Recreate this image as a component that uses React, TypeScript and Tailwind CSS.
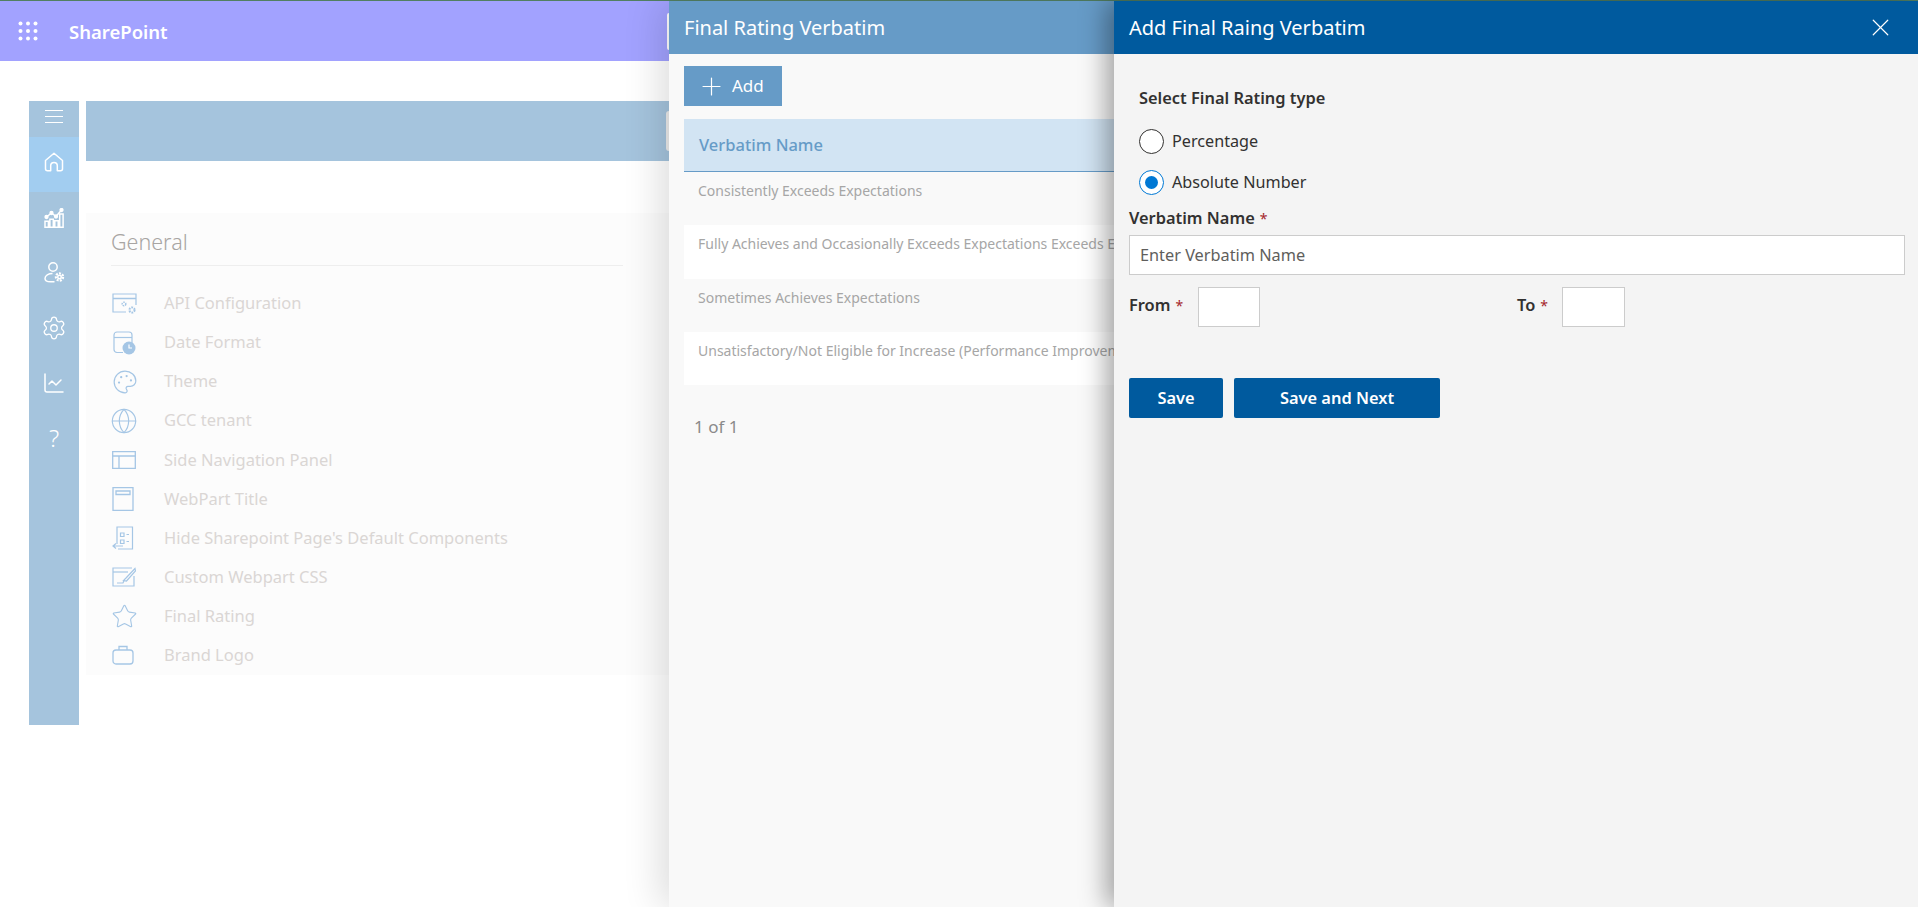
import * as React from "react";
import { Settings, ChartLine, Globe, Star, Plus, X, Palette } from "lucide-react";

const font = { fontFamily: '"Noto Sans", "Open Sans", sans-serif' };

function WaffleIcon() {
  const dots = [2, 9.5, 17];
  return (
    <svg width="20" height="20" viewBox="0 0 20 20" fill="white">
      {dots.map((y) => dots.map((x) => <circle key={`${x}-${y}`} cx={x + 0.5} cy={y + 0.5} r="2" />))}
    </svg>
  );
}

function HomeIcon() {
  return (
    <svg width="20" height="20" viewBox="0 0 20 20" fill="none" stroke="white" strokeWidth="1.5">
      <path d="M1.5 8.5 10 1.2l8.5 7.3v8.2a2 2 0 0 1-2 2h-3.2v-5a3.3 3.3 0 0 0-6.6 0v5H3.5a2 2 0 0 1-2-2z" strokeLinejoin="round" />
    </svg>
  );
}

function BarsIcon() {
  return (
    <svg width="20" height="20" viewBox="0 0 20 20" fill="none" stroke="white" strokeWidth="1.5">
      <path d="M1 19.3v-6h3.400v6zM5.900 19.3v-8h3.400v8zM10.800 19.3v-6.500h3.400v6.500zM15.700 19.3V6h3.400v13.300z" />
      <path d="M2.500 9 7.500 5l4.500 3.500L17.500 2" strokeWidth="1.500" />
      <circle cx="2.500" cy="9" r="1.400" fill="white" />
      <circle cx="7.500" cy="5" r="1.400" fill="white" />
      <circle cx="12" cy="8.500" r="1.400" fill="white" />
      <circle cx="17.500" cy="2" r="1.400" fill="white" />
    </svg>
  );
}

function UserGearIcon() {
  return (
    <svg width="21" height="21" viewBox="0 0 21 21" fill="none" stroke="white" strokeWidth="1.500">
      <circle cx="9" cy="5" r="4.200" />
      <path d="M8.500 11.500C4.500 11.500 1 13.500 1 16.500 1 18.800 3.500 19.800 6.500 19.800h4" />
      <circle cx="15.500" cy="15" r="2.500" fill="white" strokeWidth="0" />
      <circle cx="15.500" cy="15" r="3.600" strokeDasharray="2 1.200" strokeWidth="2.200" />
      <circle cx="15.500" cy="15" r="1" fill="#a5c4dd" strokeWidth="0" />
    </svg>
  );
}

function ApiConfigIcon() {
  return (
    <svg width="25" height="22" viewBox="0 0 25 22" fill="none" stroke="currentColor" strokeWidth="1.200">
      <path d="M14 19H1V1h23v11" />
      <path d="M1 5.500h23" strokeWidth="1.500" />
      <circle cx="12" cy="11" r="1.800" strokeDasharray="1.500 0.800" strokeWidth="1.500" />
      <circle cx="20" cy="17" r="2.600" strokeDasharray="1.800 1" strokeWidth="2" />
    </svg>
  );
}

function DateFormatIcon() {
  return (
    <svg width="24" height="24" viewBox="0 0 24 24" fill="none" stroke="currentColor" strokeWidth="1.200">
      <path d="M11 21.500H5a3 3 0 0 1-3-3V4a3 3 0 0 1 3-3h12a3 3 0 0 1 3 3v8" />
      <path d="M2 6.500h18" />
      <circle cx="17" cy="17" r="6.500" fill="currentColor" stroke="none" />
      <path d="M17 13.500V17h3" stroke="white" />
    </svg>
  );
}

function PanelIcon() {
  return (
    <svg width="24" height="18" viewBox="0 0 24 18" fill="none" stroke="currentColor" strokeWidth="1.300">
      <path d="M.7.700h22.600v16.600H.7z" />
      <path d="M.7 5h22.600M7 5v12.300" />
    </svg>
  );
}

function TitleIcon() {
  return (
    <svg width="22" height="24" viewBox="0 0 22 24" fill="none" stroke="currentColor" strokeWidth="1.300">
      <path d="M1 .7h20v22.600H1z" />
      <path d="M4 4h14v3.500H4z" />
    </svg>
  );
}

function HideIcon() {
  return (
    <svg width="22" height="24" viewBox="0 0 22 24" fill="none" stroke="currentColor" strokeWidth="1.200">
      <path d="M5 18V1h15.500v22H6" />
      <path d="M8.500 7h3.500v3.500H8.500zM8.500 14h3.500v3.500H8.500zM14.500 8.500H17M14.500 15.500H17" />
      <path d="M11 20H1m3-2.500L1 20l3 2.500" />
    </svg>
  );
}

function CssIcon() {
  return (
    <svg width="24" height="20" viewBox="0 0 24 20" fill="none" stroke="currentColor" strokeWidth="1.200">
      <path d="M20 1H1v18h21V9" />
      <path d="M1 5h15" />
      <path d="M23 1.500 14 11l-2.500 2.500 3 .5L23.500 4z" />
      <path d="M5 16h6l1-2.500" />
    </svg>
  );
}

function BrandIcon() {
  return (
    <svg width="22" height="20" viewBox="0 0 22 20" fill="none" stroke="currentColor" strokeWidth="1.300">
      <rect x="1" y="5" width="20" height="14" rx="3" />
      <path d="M7 5V1.500h8V5" />
    </svg>
  );
}

const settingsItems: { label: string; icon: React.ReactNode }[] = [
  { label: "API Configuration", icon: <ApiConfigIcon /> },
  { label: "Date Format", icon: <DateFormatIcon /> },
  { label: "Theme", icon: <Palette size={26} strokeWidth={1.100} /> },
  { label: "GCC tenant", icon: <Globe size={28} strokeWidth={1} className="-ml-[2px]" /> },
  { label: "Side Navigation Panel", icon: <PanelIcon /> },
  { label: "WebPart Title", icon: <TitleIcon /> },
  { label: "Hide Sharepoint Page's Default Components", icon: <HideIcon /> },
  { label: "Custom Webpart CSS", icon: <CssIcon /> },
  { label: "Final Rating", icon: <Star size={27} strokeWidth={1} className="-ml-[1px]" /> },
  { label: "Brand Logo", icon: <BrandIcon /> },
];

const verbatims = [
  "Consistently Exceeds Expectations",
  "Fully Achieves and Occasionally Exceeds Expectations Exceeds Expectations",
  "Sometimes Achieves Expectations",
  "Unsatisfactory/Not Eligible for Increase (Performance Improvement Plan)",
];

function SideNav() {
  return (
    <div className="w-[50px] h-[624px] shrink-0 bg-[#a5c4dd] flex flex-col items-center">
      <div className="h-[36px] pb-[6px] w-full flex flex-col items-center justify-center gap-[5px]">
        <div className="w-[18px] h-px bg-white" />
        <div className="w-[18px] h-px bg-white" />
        <div className="w-[18px] h-px bg-white" />
      </div>
      <div className="h-[55px] pb-[5px] w-full bg-[#a2cdf0] flex items-center justify-center">
        <HomeIcon />
      </div>
      <div className="h-[55px] pb-[4px] w-full flex items-center justify-center">
        <BarsIcon />
      </div>
      <div className="h-[55px] pb-[4px] w-full flex items-center justify-center">
        <UserGearIcon />
      </div>
      <div className="h-[55px] pb-[4px] w-full flex items-center justify-center">
        <Settings size={26} color="white" strokeWidth={1.200} />
      </div>
      <div className="h-[55px] pb-[4px] w-full flex items-center justify-center">
        <ChartLine size={24} color="white" strokeWidth={1.500} />
      </div>
      <div className="h-[55px] pb-[4px] w-full flex items-center justify-center text-white text-[24px] font-light">?</div>
    </div>
  );
}

function BackgroundPage() {
  return (
    <div className="w-[669px] shrink-0 flex flex-col overflow-hidden relative bg-white">
      <div className="h-[60px] bg-[#a2a2ff] flex items-center pl-[18px] shrink-0">
        <WaffleIcon />
        <span className="ml-[31px] pt-[1px] text-white text-[18.500px] font-semibold">SharePoint</span>
      </div>
      <div className="absolute left-[667px] top-[12px] w-[2px] h-[37px] bg-white rounded-l-sm" />
      <div className="flex pl-[29px] pt-[40px] gap-[7px]">
        <SideNav />
        <div className="flex-1 min-w-0">
          <div className="h-[60px] bg-[#a5c4dd] relative">
            <div className="absolute right-0 top-[10px] w-[3px] h-[40px] bg-[#ececec] rounded-l-sm" />
          </div>
          <div className="mt-[52px] h-[462px] bg-[#fcfcfc] pl-[25px] pr-[46px] pt-[14px]">
            <div className="h-[39px] border-b border-[#eeeeee] text-[#a8a5a3] text-[21.500px] font-light leading-[30px]">General</div>
            <div className="pt-[18px] flex flex-col">
              {settingsItems.map((item) => (
                <div key={item.label} className="h-[39.100px] flex items-center">
                  <div className="w-[53px] flex items-center pl-[1px] text-[#a5c6e5]">{item.icon}</div>
                  <span className="text-[#dad6d4] text-[16.500px] whitespace-nowrap">{item.label}</span>
                </div>
              ))}
            </div>
          </div>
        </div>
      </div>
    </div>
  );
}

function VerbatimPanel() {
  return (
    <div className="w-[445px] shrink-0 relative z-10 bg-[#f9f9f9] shadow-[-8px_0_36px_rgba(0,0,0,0.14)] flex flex-col overflow-hidden">
      <div className="h-[53px] bg-[#669bc7] flex items-center pl-[15px] text-white text-[20px]">Final Rating Verbatim</div>
      <div className="pl-[15px] pt-[12px]">
        <button className="h-[40px] w-[98px] bg-[#669bc7] text-white text-[17px] flex items-center pl-[13px] gap-[6px]">
          <Plus size={29} strokeWidth={1} />
          Add
        </button>
        <div className="mt-[13px] w-[900px]">
          <div className="h-[53px] bg-[#d2e4f3] border-b border-[#669bc7] flex items-center pl-[15px] text-[#669bc7] text-[16.500px] font-medium">
            Verbatim Name
          </div>
          {verbatims.map((name, i) => (
            <div
              key={name}
              className={
                i % 2 === 0
                  ? "h-[53.300px] pl-[14px] pt-[9px] text-[#a6a6a6] text-[14px] leading-[20px] whitespace-nowrap"
                  : "h-[53.300px] pl-[14px] pt-[9px] text-[#a6a6a6] text-[14px] leading-[20px] whitespace-nowrap bg-white"
              }
            >
              {name}
            </div>
          ))}
        </div>
        <div className="mt-[29px] pl-[10px] text-[#8a8a8a] text-[17px]">1 of 1</div>
      </div>
    </div>
  );
}

function Req() {
  return <span className="text-[#a4262c] ml-[5px] font-normal text-[14px]">*</span>;
}

function AddVerbatimPanel() {
  return (
    <div className="flex-1 min-w-0 relative z-20 bg-[#f4f4f4] shadow-[-8px_0_24px_rgba(0,0,0,0.35)] flex flex-col">
      <div className="h-[53px] bg-[#005a9e] flex items-center justify-between pl-[15px] pr-[23px] text-white text-[20px]">
        Add Final Raing Verbatim
        <X size={29} strokeWidth={1} />
      </div>
      <div className="pl-[15px] pr-[13px]">
        <div className="pl-[10px] pt-[33px] text-[#323130] text-[16.400px] font-semibold leading-[22px]">Select Final Rating type</div>
        <div className="mt-[12px] pl-[10px] flex items-center gap-[8px] h-[41px] text-[#323130] text-[16.200px]">
          <span className="w-[25px] h-[25px] rounded-full border border-[#323130] bg-white" />
          Percentage
        </div>
        <div className="pl-[10px] flex items-center gap-[8px] h-[41px] text-[#323130] text-[16.200px]">
          <span className="w-[25px] h-[25px] rounded-full border border-[#0078d4] bg-white flex items-center justify-center">
            <span className="w-[13px] h-[13px] rounded-full bg-[#0078d4]" />
          </span>
          Absolute Number
        </div>
        <div className="pt-[4px] h-[32px] text-[#323130] text-[16.400px] font-semibold leading-[22px]">
          Verbatim Name
          <Req />
        </div>
        <div className="h-[40px] bg-white border border-[#cccccc] flex items-center pl-[10px] text-[#605e5c] text-[16.300px]">Enter Verbatim Name</div>
        <div className="mt-[12px] flex items-center">
          <div className="w-[69px] pb-[4px] text-[#323130] text-[16.400px] font-semibold">
            From
            <Req />
          </div>
          <div className="w-[62px] h-[40px] bg-white border border-[#cccccc]" />
          <div className="ml-[257px] w-[45px] pb-[4px] text-[#323130] text-[16.400px] font-semibold">
            To
            <Req />
          </div>
          <div className="w-[63px] h-[40px] bg-white border border-[#cccccc]" />
        </div>
        <div className="mt-[51px] flex gap-[11px]">
          <button className="h-[40px] w-[94px] bg-[#005a9e] rounded-[2px] text-white text-[16.400px] font-semibold">Save</button>
          <button className="h-[40px] w-[206px] bg-[#005a9e] rounded-[2px] text-white text-[16.400px] font-semibold">Save and Next</button>
        </div>
      </div>
    </div>
  );
}

export default function App() {
  return (
    <div style={font} className="h-[907px] w-full overflow-hidden bg-white flex flex-col">
      <div className="h-px bg-[#527f62] shrink-0" />
      <div className="flex flex-1 min-h-0">
        <BackgroundPage />
        <VerbatimPanel />
        <AddVerbatimPanel />
      </div>
    </div>
  );
}
